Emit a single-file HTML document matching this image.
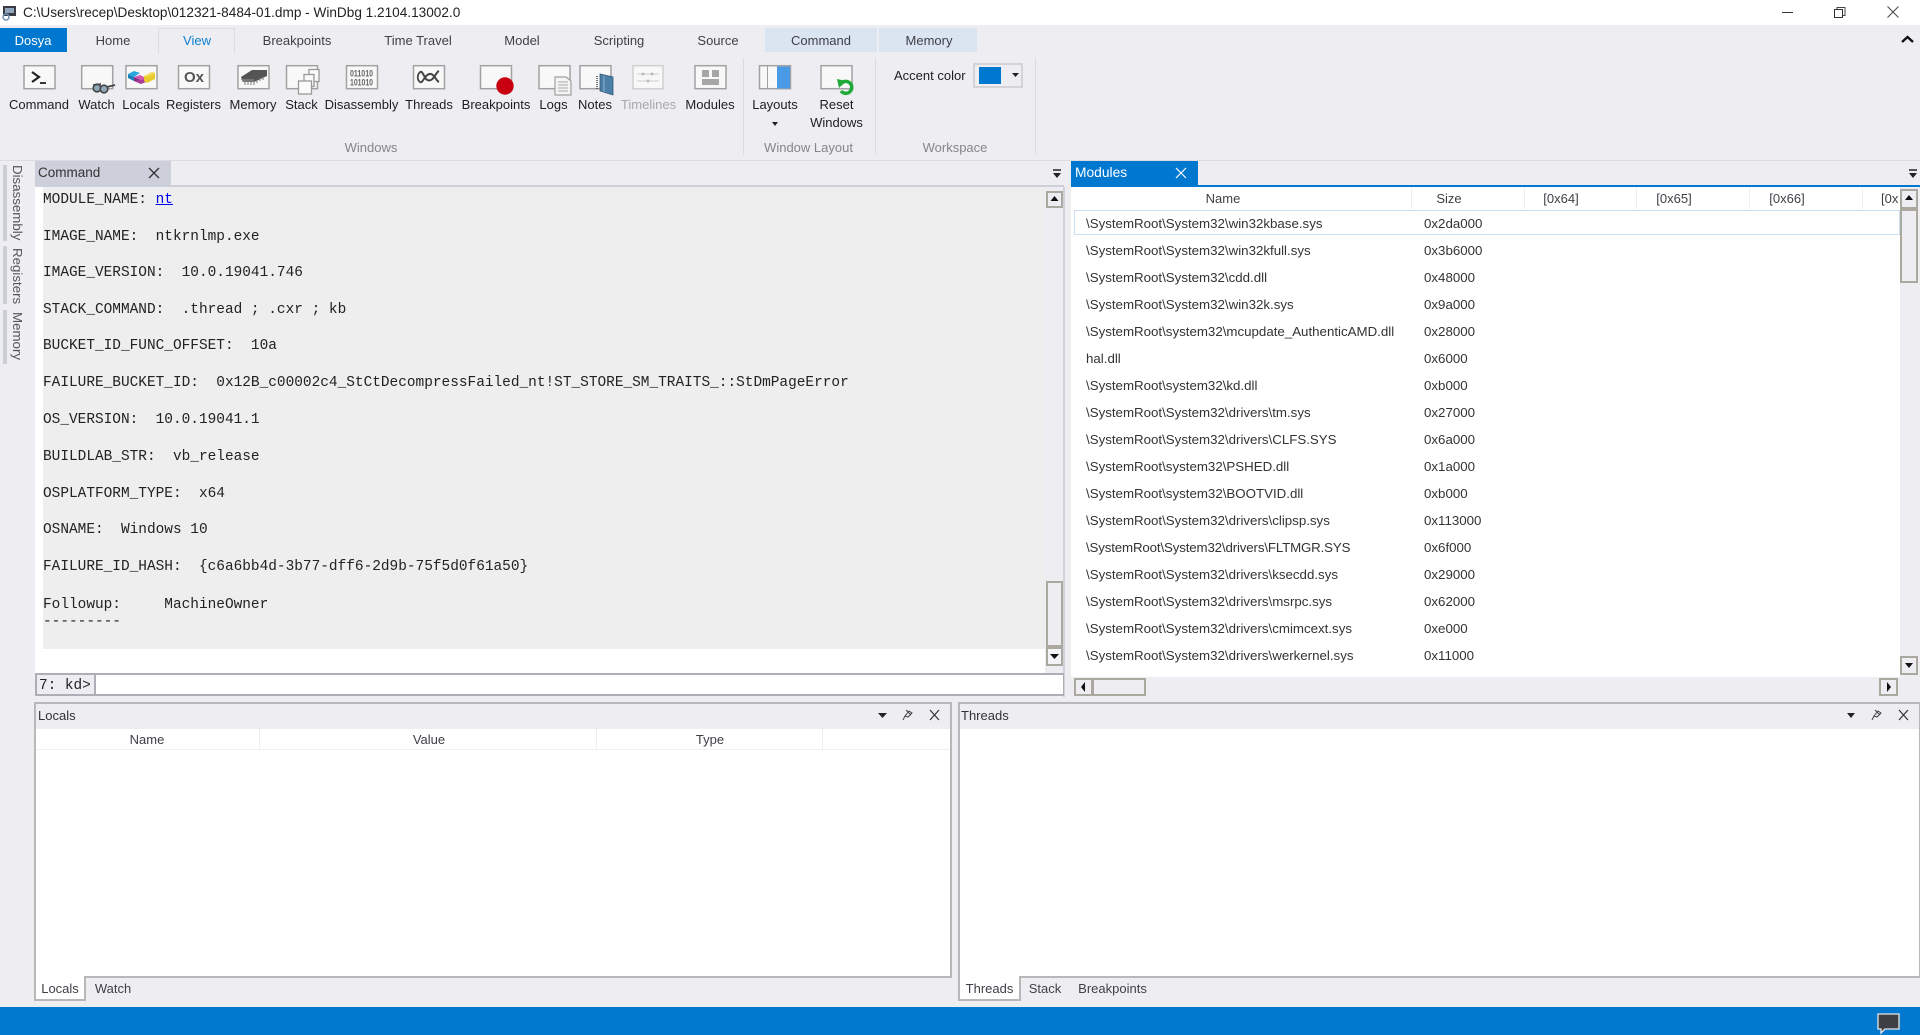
<!DOCTYPE html>
<html><head><meta charset="utf-8"><title>WinDbg</title>
<style>
html,body{margin:0;padding:0;width:1920px;height:1035px;overflow:hidden;background:#eeeef2;font-family:"Liberation Sans",sans-serif;font-size:13px;color:#3f3f46}
.b{position:absolute}
.t{position:absolute;white-space:nowrap;line-height:18px;margin-top:1px}
.c{transform:translateX(-50%)}
.k{color:#1e1e1e}
.m{position:absolute;white-space:pre;font-family:"Liberation Mono",monospace;font-size:14.45px;line-height:18px;color:#222;left:43px;margin-top:1px}
.g{color:#868686}
.v{position:absolute;white-space:nowrap;transform-origin:0 0;transform:rotate(90deg);line-height:14px;color:#555}
.sb{position:absolute;background:#eeeef2;border:2px solid #aaa89f;box-sizing:border-box}
.r .t{font-size:13.3px}
svg{position:absolute;left:0;top:0}
</style></head><body>
<!-- title bar -->
<div class="b" style="left:0;top:0;width:1920px;height:25px;background:#fff"></div>
<div class="t" style="left:23px;top:3px;font-size:13.62px;color:#222">C:\Users\recep\Desktop\012321-8484-01.dmp - WinDbg 1.2104.13002.0</div>
<!-- ribbon tabs -->
<div class="b" style="left:0;top:28px;width:67px;height:24px;background:#0078d0"></div>
<div class="b" style="left:158px;top:28px;width:77px;height:26px;border:1px solid #dcdce2;border-bottom:none;box-sizing:border-box"></div>
<div class="b" style="left:765px;top:28px;width:112px;height:24px;background:#dae5f1"></div>
<div class="b" style="left:879px;top:28px;width:98px;height:24px;background:#dae5f1"></div>
<div class="t c" style="left:33px;top:31px;color:#fff">Dosya</div>
<div class="t c" style="left:113px;top:31px">Home</div>
<div class="t c" style="left:197px;top:31px;color:#0f7fd0">View</div>
<div class="t c" style="left:297px;top:31px">Breakpoints</div>
<div class="t c" style="left:418px;top:31px">Time Travel</div>
<div class="t c" style="left:522px;top:31px">Model</div>
<div class="t c" style="left:619px;top:31px">Scripting</div>
<div class="t c" style="left:718px;top:31px">Source</div>
<div class="t c" style="left:821px;top:31px">Command</div>
<div class="t c" style="left:929px;top:31px">Memory</div>
<!-- ribbon labels -->
<div class="t c k" style="left:39px;top:95px">Command</div>
<div class="t c k" style="left:96.5px;top:95px">Watch</div>
<div class="t c k" style="left:141px;top:95px">Locals</div>
<div class="t c k" style="left:193.5px;top:95px">Registers</div>
<div class="t c k" style="left:253px;top:95px">Memory</div>
<div class="t c k" style="left:301.5px;top:95px">Stack</div>
<div class="t c k" style="left:361.5px;top:95px">Disassembly</div>
<div class="t c k" style="left:429px;top:95px">Threads</div>
<div class="t c k" style="left:496px;top:95px">Breakpoints</div>
<div class="t c k" style="left:553.5px;top:95px">Logs</div>
<div class="t c k" style="left:595px;top:95px">Notes</div>
<div class="t c" style="left:648.5px;top:95px;color:#a8a8a8">Timelines</div>
<div class="t c k" style="left:710px;top:95px">Modules</div>
<div class="t c k" style="left:775px;top:95px">Layouts</div>
<div class="t c k" style="left:836.5px;top:95px">Reset</div>
<div class="t c k" style="left:836.5px;top:113px">Windows</div>
<div class="t c g" style="left:371px;top:138px">Windows</div>
<div class="t c g" style="left:808.5px;top:138px">Window Layout</div>
<div class="t c g" style="left:955px;top:138px">Workspace</div>
<div class="t k" style="left:894px;top:66px">Accent color</div>
<div class="b" style="left:973px;top:63px;width:50px;height:25px;border:2px solid #d4d4d8;box-sizing:border-box"></div>
<div class="b" style="left:979px;top:67px;width:22px;height:17px;background:#0078d0"></div>
<div class="b" style="left:743px;top:58px;width:1px;height:97px;background:#dcdce0"></div>
<div class="b" style="left:875px;top:58px;width:1px;height:97px;background:#dcdce0"></div>
<div class="b" style="left:1035px;top:58px;width:1px;height:97px;background:#dcdce0"></div>
<div class="b" style="left:0;top:160px;width:1920px;height:1px;background:#dcdce0"></div>
<!-- side strip -->
<div class="b" style="left:3px;top:165px;width:4px;height:76px;background:#ccced6"></div>
<div class="b" style="left:3px;top:246px;width:4px;height:58px;background:#ccced6"></div>
<div class="b" style="left:3px;top:310px;width:4px;height:54px;background:#ccced6"></div>
<div class="v" style="left:24px;top:165px;font-size:13.3px">Disassembly</div>
<div class="v" style="left:24px;top:248px;font-size:13.3px">Registers</div>
<div class="v" style="left:24px;top:312px;font-size:13.3px">Memory</div>
<!-- command panel -->
<div class="b" style="left:35px;top:161px;width:136px;height:25px;background:#cdcfdb"></div>
<div class="t" style="left:38px;top:163px;color:#333;font-size:13.5px">Command</div>
<div class="b" style="left:35px;top:185px;width:1029px;height:2px;background:#cdcfdb"></div>
<div class="b" style="left:35px;top:187px;width:1010px;height:486px;background:#fff"></div>
<div class="b" style="left:43px;top:187px;width:1002px;height:462px;background:#eeeeee"></div>
<div class="b" style="left:1045px;top:187px;width:19px;height:486px;background:#eeeef2"></div>
<div class="b" style="left:1063px;top:187px;width:2px;height:510px;background:#d0d2dc"></div>
<div class="m" style="top:190px">MODULE_NAME: <span style="color:#0000ee;text-decoration:underline">nt</span></div>
<div class="m" style="top:227px">IMAGE_NAME:  ntkrnlmp.exe</div>
<div class="m" style="top:263px">IMAGE_VERSION:  10.0.19041.746</div>
<div class="m" style="top:300px">STACK_COMMAND:  .thread ; .cxr ; kb</div>
<div class="m" style="top:336px">BUCKET_ID_FUNC_OFFSET:  10a</div>
<div class="m" style="top:373px">FAILURE_BUCKET_ID:  0x12B_c00002c4_StCtDecompressFailed_nt!ST_STORE_SM_TRAITS_::StDmPageError</div>
<div class="m" style="top:410px">OS_VERSION:  10.0.19041.1</div>
<div class="m" style="top:447px">BUILDLAB_STR:  vb_release</div>
<div class="m" style="top:484px">OSPLATFORM_TYPE:  x64</div>
<div class="m" style="top:520px">OSNAME:  Windows 10</div>
<div class="m" style="top:557px">FAILURE_ID_HASH:  {c6a6bb4d-3b77-dff6-2d9b-75f5d0f61a50}</div>
<div class="m" style="top:595px">Followup:     MachineOwner</div>
<div class="m" style="top:612px">---------</div>
<div class="sb" style="left:1046px;top:191px;width:17px;height:17px"></div>
<div class="sb" style="left:1046px;top:581px;width:17px;height:66px"></div>
<div class="sb" style="left:1046px;top:647px;width:17px;height:19px;background:#f4f4f6"></div>
<!-- input -->
<div class="b" style="left:35px;top:673px;width:1029px;height:23px;background:#fff;border-top:2px solid #aeaeb6;border-bottom:2px solid #aeaeb6;border-right:1px solid #aeaeb6;box-sizing:border-box"></div>
<div class="b" style="left:35px;top:673px;width:61px;height:23px;background:#eeeef2;border:2px solid #aeaeb6;box-sizing:border-box"></div>
<div class="t" style="left:39px;top:676px;font-family:'Liberation Mono',monospace;font-size:14.4px;color:#222">7: kd&gt;</div>
<!-- modules panel -->
<div class="b" style="left:1071px;top:161px;width:127px;height:24px;background:#0078d0"></div>
<div class="b" style="left:1071px;top:185px;width:849px;height:2px;background:#0078d0"></div>
<div class="b" style="left:1071px;top:187px;width:849px;height:490px;background:#fff"></div>
<div class="t" style="left:1075px;top:163px;color:#fff;font-size:13.8px">Modules</div>
<div class="t c" style="left:1223px;top:189px">Name</div>
<div class="t c" style="left:1449px;top:189px">Size</div>
<div class="t c" style="left:1561px;top:189px">[0x64]</div>
<div class="t c" style="left:1674px;top:189px">[0x65]</div>
<div class="t c" style="left:1787px;top:189px">[0x66]</div>
<div class="t" style="left:1881px;top:189px">[0x</div>
<div class="b" style="left:1411px;top:188px;width:1px;height:21px;background:#eeeef2"></div>
<div class="b" style="left:1524px;top:188px;width:1px;height:21px;background:#eeeef2"></div>
<div class="b" style="left:1636px;top:188px;width:1px;height:21px;background:#eeeef2"></div>
<div class="b" style="left:1749px;top:188px;width:1px;height:21px;background:#eeeef2"></div>
<div class="b" style="left:1862px;top:188px;width:1px;height:21px;background:#eeeef2"></div>
<div class="b" style="left:1074px;top:210px;width:826px;height:25px;border:1px solid #c9ddf3;box-sizing:border-box"></div>
<div class="r" style="color:#333">
<div class="t" style="left:1086px;top:214px">\SystemRoot\System32\win32kbase.sys</div><div class="t" style="left:1424px;top:214px">0x2da000</div>
<div class="t" style="left:1086px;top:241px">\SystemRoot\System32\win32kfull.sys</div><div class="t" style="left:1424px;top:241px">0x3b6000</div>
<div class="t" style="left:1086px;top:268px">\SystemRoot\System32\cdd.dll</div><div class="t" style="left:1424px;top:268px">0x48000</div>
<div class="t" style="left:1086px;top:295px">\SystemRoot\System32\win32k.sys</div><div class="t" style="left:1424px;top:295px">0x9a000</div>
<div class="t" style="left:1086px;top:322px">\SystemRoot\system32\mcupdate_AuthenticAMD.dll</div><div class="t" style="left:1424px;top:322px">0x28000</div>
<div class="t" style="left:1086px;top:349px">hal.dll</div><div class="t" style="left:1424px;top:349px">0x6000</div>
<div class="t" style="left:1086px;top:376px">\SystemRoot\system32\kd.dll</div><div class="t" style="left:1424px;top:376px">0xb000</div>
<div class="t" style="left:1086px;top:403px">\SystemRoot\System32\drivers\tm.sys</div><div class="t" style="left:1424px;top:403px">0x27000</div>
<div class="t" style="left:1086px;top:430px">\SystemRoot\System32\drivers\CLFS.SYS</div><div class="t" style="left:1424px;top:430px">0x6a000</div>
<div class="t" style="left:1086px;top:457px">\SystemRoot\system32\PSHED.dll</div><div class="t" style="left:1424px;top:457px">0x1a000</div>
<div class="t" style="left:1086px;top:484px">\SystemRoot\system32\BOOTVID.dll</div><div class="t" style="left:1424px;top:484px">0xb000</div>
<div class="t" style="left:1086px;top:511px">\SystemRoot\System32\drivers\clipsp.sys</div><div class="t" style="left:1424px;top:511px">0x113000</div>
<div class="t" style="left:1086px;top:538px;letter-spacing:-.15px">\SystemRoot\System32\drivers\FLTMGR.SYS</div><div class="t" style="left:1424px;top:538px">0x6f000</div>
<div class="t" style="left:1086px;top:565px">\SystemRoot\System32\drivers\ksecdd.sys</div><div class="t" style="left:1424px;top:565px">0x29000</div>
<div class="t" style="left:1086px;top:592px">\SystemRoot\System32\drivers\msrpc.sys</div><div class="t" style="left:1424px;top:592px">0x62000</div>
<div class="t" style="left:1086px;top:619px">\SystemRoot\System32\drivers\cmimcext.sys</div><div class="t" style="left:1424px;top:619px">0xe000</div>
<div class="t" style="left:1086px;top:646px">\SystemRoot\System32\drivers\werkernel.sys</div><div class="t" style="left:1424px;top:646px">0x11000</div>
</div>
<!-- modules scrollbars -->
<div class="b" style="left:1900px;top:187px;width:20px;height:490px;background:#eeeef2"></div>
<div class="sb" style="left:1900px;top:189px;width:18px;height:20px"></div>
<div class="sb" style="left:1900px;top:209px;width:18px;height:74px"></div>
<div class="sb" style="left:1900px;top:656px;width:18px;height:19px"></div>
<div class="b" style="left:1071px;top:677px;width:849px;height:20px;background:#eeeef2"></div>
<div class="sb" style="left:1074px;top:678px;width:19px;height:18px"></div>
<div class="sb" style="left:1092px;top:678px;width:54px;height:18px"></div>
<div class="sb" style="left:1879px;top:678px;width:19px;height:18px"></div>
<!-- locals -->
<div class="b" style="left:34px;top:702px;width:918px;height:276px;background:#fff;border:2px solid #b8b8b8;box-sizing:border-box"></div>
<div class="b" style="left:36px;top:704px;width:914px;height:25px;background:#eeeef2"></div>
<div class="t" style="left:38px;top:706px;color:#333">Locals</div>
<div class="t c" style="left:147px;top:730px">Name</div>
<div class="t c" style="left:429px;top:730px">Value</div>
<div class="t c" style="left:710px;top:730px">Type</div>
<div class="b" style="left:36px;top:749px;width:914px;height:1px;background:#f0f0f2"></div>
<div class="b" style="left:259px;top:729px;width:1px;height:21px;background:#eeeef2"></div>
<div class="b" style="left:596px;top:729px;width:1px;height:21px;background:#eeeef2"></div>
<div class="b" style="left:822px;top:729px;width:1px;height:21px;background:#eeeef2"></div>
<div class="b" style="left:34px;top:976px;width:52px;height:25px;background:#fff;border:2px solid #b8b8b8;border-top:none;box-sizing:border-box"></div>
<div class="t c" style="left:60px;top:979px">Locals</div>
<div class="t c" style="left:113px;top:979px">Watch</div>
<!-- threads -->
<div class="b" style="left:958px;top:702px;width:962px;height:276px;background:#fff;border:2px solid #b8b8b8;border-right-width:1px;box-sizing:border-box"></div>
<div class="b" style="left:960px;top:704px;width:959px;height:25px;background:#eeeef2"></div>
<div class="t" style="left:961px;top:706px;color:#333">Threads</div>
<div class="b" style="left:958px;top:976px;width:63px;height:25px;background:#fff;border:2px solid #b8b8b8;border-top:none;box-sizing:border-box"></div>
<div class="t c" style="left:989.500px;top:979px">Threads</div>
<div class="t c" style="left:1045px;top:979px">Stack</div>
<div class="t c" style="left:1112.500px;top:979px">Breakpoints</div>
<!-- status -->
<div class="b" style="left:0;top:1007px;width:1920px;height:28px;background:#0179ce"></div>

<svg width="1920" height="1035" viewBox="0 0 1920 1035" fill="none">
<!-- title icon -->
<rect x="3" y="6" width="13" height="10" fill="#3a3a44"/><rect x="5" y="8" width="9" height="5" fill="#8fa6bd"/><circle cx="6" cy="17" r="3" stroke="#6d8fb5" stroke-width="1.5"/>
<!-- window controls -->
<path d="M1782 12.5H1793" stroke="#333" stroke-width="1"/>
<path d="M1837 9.5V7.5H1845V15.5H1843" stroke="#444"/><rect x="1834.5" y="9.5" width="8" height="8" stroke="#333"/>
<path d="M1887.5 6.5L1898.5 17.5M1898.5 6.5L1887.5 17.5" stroke="#444"/>
<path d="M1902 42L1907.500 37L1913 42" stroke="#111" stroke-width="2.4"/>
<!-- frames -->
<g stroke="#a2a2a2" stroke-width="1.5" fill="#f8f8f8">
<rect x="24" y="65.700" width="31" height="23"/><rect x="81.700" y="65.700" width="31" height="23"/><rect x="126" y="65.700" width="31" height="23"/><rect x="178.500" y="65.700" width="31" height="23"/><rect x="238" y="65.700" width="31" height="23"/><rect x="286.500" y="65.700" width="31" height="23"/><rect x="346.500" y="65.700" width="31" height="23"/><rect x="413.500" y="65.700" width="31" height="23"/><rect x="480.500" y="65.700" width="31" height="23"/><rect x="539" y="65.700" width="31" height="23"/><rect x="580" y="65.700" width="31" height="23"/><rect x="633" y="65.700" width="30" height="23" stroke="#d0d0d0"/><rect x="695" y="65.700" width="31" height="23"/><rect x="759.500" y="65.700" width="31" height="23"/><rect x="821" y="65.700" width="31" height="23"/>
</g>
<!-- command -->
<path d="M32 72L39 77L32 82" stroke="#222" stroke-width="2.200"/><path d="M40 83H46" stroke="#222" stroke-width="1.800"/>
<!-- watch glasses -->
<circle cx="97" cy="88" r="3.800" fill="#8ea8b8" stroke="#444" stroke-width="1.600"/><circle cx="104" cy="89" r="3.800" fill="#8ea8b8" stroke="#444" stroke-width="1.600"/><path d="M107 87L115 85" stroke="#444" stroke-width="1.800"/><path d="M93 85L101 84" stroke="#444" stroke-width="1.500"/>
<!-- locals blocks -->
<path d="M128 74L134 71L140 73L134 77Z" fill="#28a8e0"/><path d="M128 74V78L134 81V77Z" fill="#1a7fb8"/><path d="M134 77L140 75L146 78L141 80Z" fill="#d458b0"/><path d="M134 77V81L141 84V80Z" fill="#8a2f82"/><path d="M134 81L141 84L146 82V78L141 80Z" fill="#a83c98"/><path d="M144 76L152 72L155 73V79L147 83L144 81Z" fill="#e8cc2e"/><path d="M144 76L152 72L155 73L147 77Z" fill="#f4e060"/>
<!-- registers -->
<text x="194" y="82" text-anchor="middle" font-family="Liberation Sans" font-size="15" font-weight="bold" fill="#555">Ox</text>
<!-- memory chip -->
<path d="M241 77L252 70H267V76L254 82H243Z" fill="#555"/><path d="M243 82H254V79H241Z" fill="#777"/><path d="M245 82V85M248 82V85M251 82V85M254 82V85M257 80V83M260 78V81M263 77V80" stroke="#777" stroke-width="1"/>
<!-- stack -->
<rect x="309" y="69.500" width="10" height="12" fill="#fafafa" stroke="#999" stroke-width="1.300"/><rect x="304" y="74.500" width="10" height="12" fill="#fafafa" stroke="#999" stroke-width="1.300"/><rect x="298.500" y="81" width="13" height="13" fill="#fafafa" stroke="#999" stroke-width="1.300"/>
<!-- disassembly -->
<text x="350" y="76.500" textLength="23" lengthAdjust="spacingAndGlyphs" font-family="Liberation Sans" font-size="9.500" font-weight="bold" fill="#666">011010</text>
<text x="350" y="85.500" textLength="23" lengthAdjust="spacingAndGlyphs" font-family="Liberation Sans" font-size="9.500" font-weight="bold" fill="#666">101010</text>
<!-- threads -->
<path d="M420 72C424 70 424 83 431 80C435 78 436 72 439 71" stroke="#444" stroke-width="2"/><path d="M420 82C423 84 425 73 431 74C435 75 436 81 439 82" stroke="#444" stroke-width="2"/><path d="M420 72C417 75 417 80 420 82" stroke="#444" stroke-width="1.800"/>
<!-- breakpoint -->
<circle cx="505" cy="86" r="8.700" fill="#c8000f"/>
<!-- logs page -->
<path d="M555 77H566L571 81V95H555Z" fill="#f4f4f4" stroke="#a0a0a0" stroke-width="1.200"/><path d="M558 82H568M558 85H568M558 88H568M558 91H568" stroke="#aaa"/>
<!-- notes -->
<path d="M600 74L613 77V95L600 91Z" fill="#4b7fa8" stroke="#30597a" stroke-width=".8"/><path d="M604 76V92" stroke="#8db3cf"/><path d="M597 76V90" stroke="#444" stroke-width="1.500" stroke-dasharray="1 1"/>
<!-- timelines -->
<path d="M637 74H659M637 81H659" stroke="#ccc"/><circle cx="643" cy="74" r="1.500" fill="#bbb"/><circle cx="652" cy="74" r="1.500" fill="#bbb"/><circle cx="648" cy="81" r="1.500" fill="#bbb"/>
<!-- modules -->
<rect x="702" y="70" width="7" height="7" fill="#a6a6a6"/><rect x="712" y="70" width="7" height="7" fill="#a6a6a6"/><rect x="702" y="79" width="17" height="6" fill="#a6a6a6"/>
<!-- layouts -->
<rect x="777" y="66.500" width="13" height="22" fill="#4a9be6"/><path d="M767.500 66V89" stroke="#a2a2a2" stroke-width="1"/>
<!-- reset -->
<path d="M840.500 84.500A6 6 0 1 1 841 91" stroke="#1faa3a" stroke-width="3.500"/><path d="M837 79L846 81L839 88Z" fill="#1faa3a"/>
<!-- accent arrow and layouts arrow -->
<path d="M1012 73H1019L1015.500 77Z" fill="#222"/>
<path d="M772 122H778L775 126Z" fill="#222"/>
<!-- tab close -->
<path d="M149 168L159 178M159 168L149 178" stroke="#333" stroke-width="1.300"/>
<path d="M1176 168L1186 178M1186 168L1176 178" stroke="#fff" stroke-width="1.200"/>
<!-- dropdowns -->
<path d="M1053 170H1061" stroke="#222" stroke-width="1.500"/><path d="M1053 173H1061L1057 178Z" fill="#222"/>
<path d="M1909 170H1917" stroke="#222" stroke-width="1.500"/><path d="M1909 173H1917L1913 178Z" fill="#222"/>
<!-- scroll arrows -->
<path d="M1054.500 196L1050.500 201H1058.500Z" fill="#111"/>
<path d="M1050 654H1059L1054.500 659Z" fill="#111"/>
<path d="M1909 195L1905 200H1913Z" fill="#111"/>
<path d="M1905 663H1913L1909 668Z" fill="#111"/>
<path d="M1081 687L1085 682V692Z" fill="#111"/>
<path d="M1891 687L1887 682V692Z" fill="#111"/>
<!-- locals ctrls -->
<path d="M878 713H887L882.500 718Z" fill="#222"/>
<path d="M906 710L911 715M909 711L905 716L908 717L912 713ZM905 716L903 720" stroke="#444"/>
<path d="M930 710L939 720M939 710L930 720" stroke="#333" stroke-width="1.200"/>
<!-- threads ctrls -->
<path d="M1847 713H1855L1851 718Z" fill="#222"/>
<path d="M1875 710L1880 715M1878 711L1874 716L1877 717L1881 713ZM1874 716L1872 720" stroke="#444"/>
<path d="M1899 710L1908 720M1908 710L1899 720" stroke="#333" stroke-width="1.200"/>
<!-- notification -->
<path d="M1878 1014H1899V1029H1885L1881 1033V1029H1878Z" fill="#3f3f46" stroke="#e6e6e6" stroke-width="1.300"/>
</svg>
</body></html>
